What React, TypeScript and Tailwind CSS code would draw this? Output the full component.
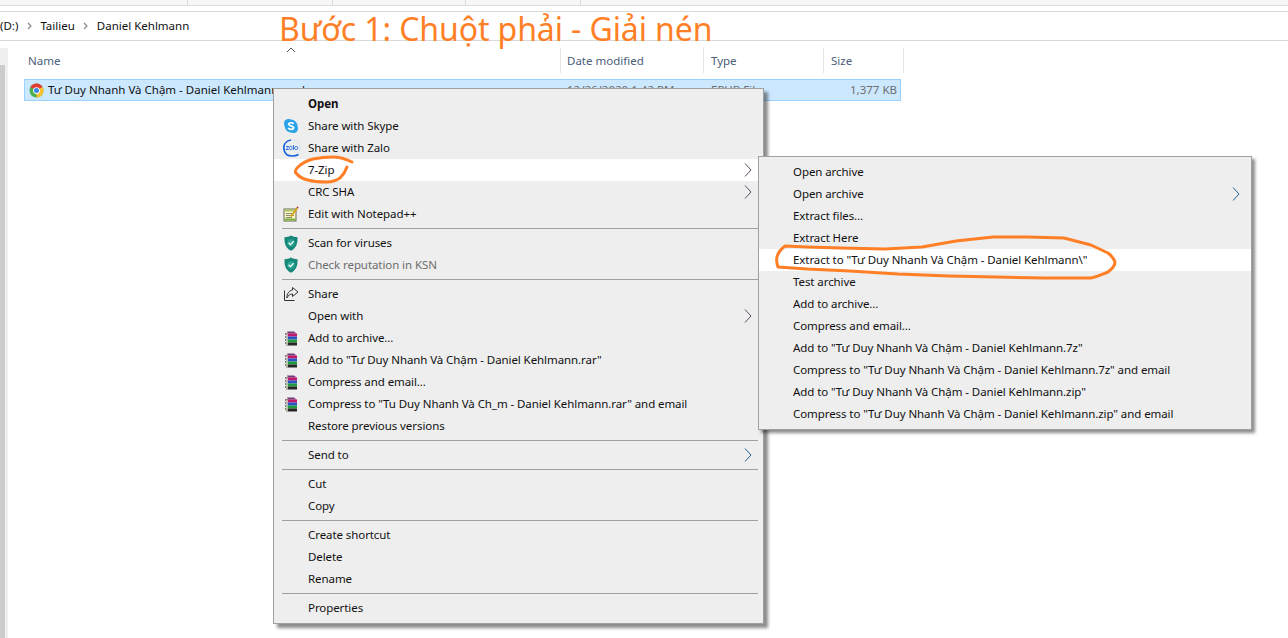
import { ReactNode } from 'react';

const PAGE_FONT = { fontFamily: '"Noto Sans", sans-serif' };

function Separator() {
  return (
    <div className="h-[7px] flex items-center pl-[8px] pr-[5px]">
      <div className="h-px w-full bg-[#a0a0a0]" />
    </div>
  );
}

function Arrow({ blue = false }: { blue?: boolean }) {
  return (
    <svg width="8" height="14" viewBox="0 0 8 14" fill="none" className="shrink-0">
      <path d="M1 0.5 L7 7 L1 13.5" stroke={blue ? '#1f5f90' : '#5a4a60'} strokeWidth="1" />
    </svg>
  );
}

function Row({
  label,
  icon,
  arrow,
  blueArrow,
  active,
  disabled,
  bold,
}: {
  label: string;
  icon?: ReactNode;
  arrow?: boolean;
  blueArrow?: boolean;
  active?: boolean;
  disabled?: boolean;
  bold?: boolean;
}) {
  return (
    <div
      className={`relative h-[22px] flex items-center justify-between pl-[34px] pr-[11px] text-[11.5px] tracking-[-0.08px] whitespace-nowrap ${active ? 'bg-white' : ''} ${disabled ? 'text-[#6d6d6d]' : 'text-[#111111]'} ${bold ? 'font-bold' : ''}`}
    >
      {icon && <span className="absolute left-[9px] top-[3px] w-4 h-4 flex items-center justify-center">{icon}</span>}
      <span>{label}</span>
      {arrow && <Arrow blue={blueArrow} />}
    </div>
  );
}

function SkypeIcon() {
  return (
    <svg width="16" height="16" viewBox="0 0 16 16">
      <circle cx="5.5" cy="5.5" r="4.5" fill="#2aa4e8" />
      <circle cx="10.5" cy="10.5" r="4.5" fill="#2aa4e8" />
      <circle cx="8" cy="8" r="6.4" fill="#2aa4e8" />
      <path d="M10.6 5.8 C9.6 4.3 5.6 4.3 5.6 6.3 C5.6 8.2 10.6 7.5 10.6 9.8 C10.6 11.8 6.4 11.8 5.2 10" fill="none" stroke="#fff" strokeWidth="1.7" />
    </svg>
  );
}

function ZaloIcon() {
  return (
    <svg width="18" height="18" viewBox="0 0 18 18" className="shrink-0 ml-[2px]">
      <path d="M8 1 C3.5 1.5 0.8 5 0.8 9 C0.8 12 2 14 3.5 15.5 C6.5 17.5 12 17.5 15.5 15.5" fill="none" stroke="#1a63dc" strokeWidth="1.7" />
      <path d="M8 1 C13.5 0.8 17 4.5 17 9 C17 11 16.5 13 15.5 14.5" fill="none" stroke="#d4e2f5" strokeWidth="1" />
      <rect x="3" y="7" width="2.8" height="0.9" fill="#1a63dc" />
      <rect x="3" y="10" width="2.8" height="0.9" fill="#1a63dc" />
      <path d="M5.8 7.6 L3 10.4" stroke="#1a63dc" strokeWidth="0.8" />
      <rect x="6.6" y="7.2" width="2.4" height="3.6" rx="1.1" fill="none" stroke="#1a63dc" strokeWidth="0.8" />
      <rect x="10" y="6" width="0.9" height="4.9" fill="#1a63dc" />
      <circle cx="13.2" cy="9" r="1.6" fill="none" stroke="#1a63dc" strokeWidth="0.8" />
    </svg>
  );
}

function NotepadIcon() {
  return (
    <svg width="16" height="16" viewBox="0 0 16 16">
      <rect x="1" y="3" width="12" height="12" fill="#fbf6c8" stroke="#6b6b55" strokeWidth="1" />
      <rect x="1.5" y="3.5" width="11" height="2" fill="#a8c86a" />
      <rect x="3" y="7" width="6" height="1" fill="#8a8a70" />
      <rect x="3" y="9" width="8" height="1" fill="#8a8a70" />
      <rect x="3" y="11" width="6" height="1" fill="#8a8a70" />
      <rect x="1.5" y="12.5" width="11" height="2" fill="#7eb040" />
      <path d="M7 10 L13.5 1.5 L15 2.5 L8.5 11 Z" fill="#d9a21b" />
      <path d="M13.5 1.5 L15 2.5 L15.6 1 L14.4 0.4 Z" fill="#a52a3a" />
    </svg>
  );
}

function ShieldIcon() {
  return (
    <svg width="14" height="16" viewBox="0 0 14 16">
      <path d="M7 0.5 C9 1.8 11 2.2 13.5 2.2 C13.8 8 12.5 13 7 15.8 C1.5 13 0.2 8 0.5 2.2 C3 2.2 5 1.8 7 0.5 Z" fill="#17877a" />
      <circle cx="7" cy="8" r="3.8" fill="#2aa593" />
      <path d="M4.6 7.8 L6.4 9.6 L9.6 6.2" fill="none" stroke="#fff" strokeWidth="1.3" />
    </svg>
  );
}

function ShareIcon() {
  return (
    <svg width="16" height="16" viewBox="0 0 16 16" fill="none" stroke="#333" strokeWidth="1">
      <path d="M1.5 4.5 V14.5 H11.5" />
      <path d="M9.5 1.5 L15 6 L9.5 10.5 V8 C7 8 5 9.5 3.8 12 C3.8 8 6 4.5 9.5 4 Z" />
    </svg>
  );
}

function RarIcon() {
  return (
    <svg width="14" height="15" viewBox="0 0 14 15">
      <path d="M3 0.5 H10 L12.5 2.5 H4 Z" fill="#6d3d78" />
      <rect x="2" y="2.5" width="11" height="3" fill="#c2186c" />
      <rect x="2" y="5.5" width="11" height="3" fill="#2a52c8" />
      <rect x="2" y="8.5" width="11" height="3" fill="#1f9a3c" />
      <rect x="2" y="11.5" width="11" height="3" fill="#262626" />
      <path d="M4 3 H1 M4 6 H1 M4 9 H1 M4 12 H1" stroke="#111" strokeWidth="1" />
      <path d="M3 2.5 V14.5" stroke="#f3f0d8" strokeWidth="1.4" />
    </svg>
  );
}

function ChromeIcon() {
  return (
    <svg width="15" height="15" viewBox="0 0 16 16">
      <circle cx="8" cy="8" r="7.5" fill="#4caf50" />
      <path d="M8 8 L1.5 4.2 A7.5 7.5 0 0 1 14.5 4.2 Z" fill="#e53935" />
      <path d="M8 8 L14.5 4.2 A7.5 7.5 0 0 1 8 15.5 Z" fill="#fbc02d" />
      <circle cx="8" cy="8" r="3.6" fill="#fff" />
      <circle cx="8" cy="8" r="2.7" fill="#3f87e8" />
    </svg>
  );
}

function Crumb() {
  return (
    <svg width="5" height="8" viewBox="0 0 5 8" fill="none" className="shrink-0 mx-[8.5px]" stroke="#8a8a8a" strokeWidth="1.2">
      <path d="M1 1 L4 4 L1 7" />
    </svg>
  );
}

function Column({ label, width, pad }: { label: string; width: string; pad: string }) {
  return (
    <div className={`h-[25px] shrink-0 flex items-center border-r border-[#e5e5e5] text-[11.5px] text-[#4c607a] ${width} ${pad}`}>{label}</div>
  );
}

export default function App() {
  return (
    <div className="relative w-[1288px] h-[638px] overflow-hidden bg-white" style={PAGE_FONT}>
      {/* toolbar left over at the top */}
      <div className="h-[6px] bg-[#f5f6f7] border-b border-[#dcdcdc] flex">
        <div className="w-[188px] border-r border-[#dcdcdc]" />
        <div className="w-[145px] border-r border-[#dcdcdc]" />
        <div className="w-[133px] border-r border-[#dcdcdc]" />
        <div className="w-[115px] border-r border-[#dcdcdc]" />
      </div>
      <div className="h-[5px]" />
      {/* address bar */}
      <div className="h-[30px] border-y border-[#d9d9d9] flex items-center text-[11.5px] text-[#111111]">
        <span>(D:)</span>
        <Crumb />
        <span>Tailieu</span>
        <Crumb />
        <span>Daniel Kehlmann</span>
      </div>

      <div className="flex">
        {/* nav pane scroll */}
        <div className="w-[8px] mt-[7px] h-[590px] bg-[#cdcdcd] border-t-[17px] border-t-[#f0f0f0] border-r-[3px] border-r-[#f0f0f0]" />
        <div className="ml-[16px] w-[881px]">
          <div className="relative mt-[7px] flex">
            <Column label="Name" width="w-[537px]" pad="pl-[4px]" />
            <Column label="Date modified" width="w-[143px]" pad="pl-[6px]" />
            <Column label="Type" width="w-[120px]" pad="pl-[7px]" />
            <Column label="Size" width="w-[80px]" pad="pl-[7px]" />
            <svg width="10" height="6" viewBox="0 0 10 6" className="absolute left-[262px] -top-[1px]" fill="none" stroke="#555" strokeWidth="1">
              <path d="M1 5 L5 1 L9 5" />
            </svg>
          </div>
          <div className="mt-[6px] h-[22px] w-[877px] bg-[#cce8ff] border border-[#99d1ff] flex items-center text-[11.5px] text-[#111111]">
            <span className="ml-[4px] mr-[4px]"><ChromeIcon /></span>
            <span className="w-[519px] shrink-0">Tư Duy Nhanh Và Chậm - Daniel Kehlmann.epub</span>
            <span className="w-[144px] shrink-0 text-[#6d6d6d]">12/26/2020 1:42 PM</span>
            <span className="w-[120px] shrink-0 text-[#6d6d6d]">EPUB File</span>
            <span className="w-[66px] shrink-0 text-right text-[#6d6d6d]">1,377 KB</span>
          </div>
        </div>
      </div>

      {/* main context menu */}
      <div className="absolute left-[273px] top-[88px] w-[491px] py-[4px] bg-[#eeeeee] border border-[#a0a0a0] shadow-[4px_4px_3px_rgba(0,0,0,0.45)]">
        <Row label="Open" bold />
        <Row label="Share with Skype" icon={<SkypeIcon />} />
        <Row label="Share with Zalo" icon={<ZaloIcon />} />
        <Row label="7-Zip" arrow active />
        <Row label="CRC SHA" arrow />
        <Row label="Edit with Notepad++" icon={<NotepadIcon />} />
        <Separator />
        <Row label="Scan for viruses" icon={<ShieldIcon />} />
        <Row label="Check reputation in KSN" icon={<ShieldIcon />} disabled />
        <Separator />
        <Row label="Share" icon={<ShareIcon />} />
        <Row label="Open with" arrow />
        <Row label="Add to archive..." icon={<RarIcon />} />
        <Row label={'Add to "Tư Duy Nhanh Và Chậm - Daniel Kehlmann.rar"'} icon={<RarIcon />} />
        <Row label="Compress and email..." icon={<RarIcon />} />
        <Row label={'Compress to "Tu Duy Nhanh Và Ch_m - Daniel Kehlmann.rar" and email'} icon={<RarIcon />} />
        <Row label="Restore previous versions" />
        <Separator />
        <Row label="Send to" arrow blueArrow />
        <Separator />
        <Row label="Cut" />
        <Row label="Copy" />
        <Separator />
        <Row label="Create shortcut" />
        <Row label="Delete" />
        <Row label="Rename" />
        <Separator />
        <Row label="Properties" />
      </div>

      {/* 7-Zip submenu */}
      <div className="absolute left-[758px] top-[156px] w-[494px] py-[4px] bg-[#eeeeee] border border-[#a0a0a0] shadow-[3px_3px_3px_rgba(0,0,0,0.45)]">
        <Row label="Open archive" />
        <Row label="Open archive" arrow blueArrow />
        <Row label="Extract files..." />
        <Row label="Extract Here" />
        <Row label={'Extract to "Tư Duy Nhanh Và Chậm - Daniel Kehlmann\\"'} active />
        <Row label="Test archive" />
        <Row label="Add to archive..." />
        <Row label="Compress and email..." />
        <Row label={'Add to "Tư Duy Nhanh Và Chậm - Daniel Kehlmann.7z"'} />
        <Row label={'Compress to "Tư Duy Nhanh Và Chậm - Daniel Kehlmann.7z" and email'} />
        <Row label={'Add to "Tư Duy Nhanh Và Chậm - Daniel Kehlmann.zip"'} />
        <Row label={'Compress to "Tư Duy Nhanh Và Chậm - Daniel Kehlmann.zip" and email'} />
      </div>

      {/* hand-drawn annotations on top */}
      <div className="absolute left-[279px] top-[7px] text-[32px] leading-[44px] tracking-[-0.1px] text-[#ff7f27] whitespace-nowrap">
        Bước 1: Chuột phải - Giải nén
      </div>
      <svg width="1288" height="638" viewBox="0 0 1288 638" fill="none" stroke="#ff7f27" strokeWidth="3" strokeLinejoin="round" strokeLinecap="round" className="absolute left-0 top-0 pointer-events-none">
        <path d="M352 162 C346 159 339 157 333 157 C325 157 318 158 313 159 C306 161 301 164 298 167 C295 170 295 172 296 173 C299 177 303 179 308 180 C314 182 320 182 327 182 C333 182 337 180 340 178 C344 174 346 170 347 167" />
        <path d="M785 246 C781 249 778 253 777 257 C776 261 777 264 778 267 L807 269 L850 271 L898 274 L949 276 L996 277 L1044 278 L1091 278 C1097 277 1100 275 1108 272 C1112 269 1115 266 1115 262 C1114 259 1112 256 1108 253 L1091 245 L1064 238 L1027 237 L993 237 L956 241 L922 247 L885 249 L841 248 L807 247 Z" />
      </svg>
    </div>
  );
}
